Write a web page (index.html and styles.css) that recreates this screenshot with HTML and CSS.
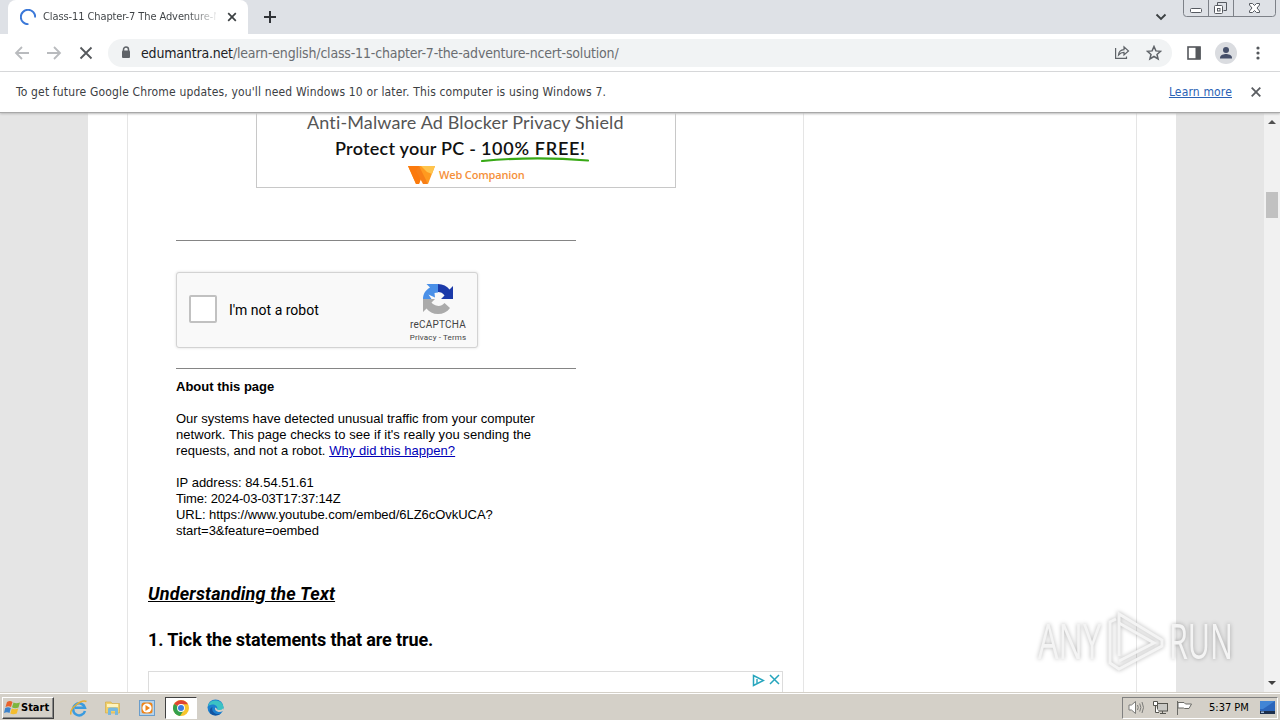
FILE: index.html
```html
<!DOCTYPE html>
<html lang="en">
	<head>
		<meta charset="UTF-8">
		<title>Class-11 Chapter-7 The Adventure</title>
		<link rel="stylesheet" href="styles.css">
	</head>
	<body>
		<div class="screen">

			<div class="tabstrip">
				<div class="tab">
					<svg class="spinner" width="16" height="16" viewBox="0 0 16 16"><path d="M8.500 15.200A7.200 7.200 0 1 1 15.200 8.500" fill="none" stroke="#3b78d8" stroke-width="2"/></svg>
					<span class="tab-title">Class-11 Chapter-7 The Adventure-N</span>
					<svg class="tab-close" width="10" height="10" viewBox="0 0 10 10"><path d="M1.200 1.200L8.800 8.800M8.800 1.200L1.200 8.800" stroke="#3c4043" stroke-width="1.700"/></svg>
				</div>
				<svg class="new-tab" width="12" height="12" viewBox="0 0 12 12"><path d="M6 0V12M0 6H12" stroke="#303337" stroke-width="2"/></svg>
				<svg class="tab-search" width="12" height="8" viewBox="0 0 12 8"><path d="M1.500 1.500L6 6L10.500 1.500" fill="none" stroke="#3c4043" stroke-width="1.900"/></svg>
				<div class="window-buttons">
					<svg width="93" height="17" viewBox="0 0 93 17" fill="none" stroke="#7d8188">
						<path d="M.5 0V13.500Q.5 16.500 3.500 16.500H89.500Q92.500 16.500 92.500 13.500V0M25.500 0V16M50.500 0V16"/>
						<g stroke="#565a61">
							<rect x="7.500" y="8.500" width="11" height="4" rx="1" fill="#fff"/>
							<path d="M34.500 5.500V2.500H43.500V10.500H40.500"/>
							<rect x="31.500" y="5.500" width="8" height="8" rx="1" fill="#fff"/>
							<rect x="34.500" y="8.500" width="2.500" height="2.500"/>
							<path d="M66.500 3.500H69.500L71.500 5.500L73.500 3.500H76.500V5L74 8L76.500 11V12.500H73.500L71.500 10.500L69.500 12.500H66.500V11L69 8L66.500 5Z" fill="#fff"/>
						</g>
					</svg>
				</div>
			</div>

			<div class="toolbar">
				<svg class="nav" width="16" height="14" viewBox="0 0 16 14"><path d="M15 7H2M8 1L2 7L8 13" fill="none" stroke="#b9bbbe" stroke-width="1.800"/></svg>
				<svg class="nav" width="16" height="14" viewBox="0 0 16 14"><path d="M1 7H14M8 1L14 7L8 13" fill="none" stroke="#b9bbbe" stroke-width="1.800"/></svg>
				<svg class="nav" width="16" height="14" viewBox="0 0 16 14"><path d="M2.500 1.500L13.500 12.500M13.500 1.500L2.500 12.500" stroke="#55585c" stroke-width="1.800"/></svg>
				<div class="omnibox">
					<svg width="10" height="13" viewBox="0 0 10 13"><path d="M2.500 5V3.500A2.500 2.500 0 0 1 7.500 3.500V5" fill="none" stroke="#5f6368" stroke-width="1.500"/><rect x="1" y="4.500" width="8" height="7.500" rx="1" fill="#5f6368"/></svg>
					<span class="url"><b>edumantra.net</b>/learn-english/class-11-chapter-7-the-adventure-ncert-solution/</span>
					<svg class="share" width="16" height="15" viewBox="0 0 16 15" fill="none" stroke="#5f6368" stroke-width="1.200"><path d="M1.600 3V13.400H12.500V11.500"/><path d="M4.500 10C4.800 6.500 7 4.800 10 4.600V1.800L14.500 6L10 10V7.400C7.500 7.400 6 8.200 4.500 10Z"/></svg>
					<svg class="star" width="16" height="16" viewBox="0 0 16 16"><path d="M8 1.500L9.900 5.900L14.600 6.300L11 9.400L12.100 14L8 11.500L3.900 14L5 9.400L1.400 6.300L6.100 5.900Z" fill="none" stroke="#5f6368" stroke-width="1.500"/></svg>
				</div>
				<svg class="panel-icon" width="14" height="14" viewBox="0 0 14 14"><rect x="1" y="1" width="12" height="12" fill="none" stroke="#55585c" stroke-width="1.600"/><rect x="8.500" y="1" width="5" height="12" fill="#55585c"/></svg>
				<svg class="avatar" width="22" height="22" viewBox="0 0 22 22"><circle cx="11" cy="11" r="11" fill="#dadce0"/><circle cx="11" cy="8" r="3" fill="#46506a"/><path d="M5 16.500V15.500C5 13 9 12 11 12S17 13 17 15.500V16.500Z" fill="#46506a"/></svg>
				<svg class="dots" width="4" height="14" viewBox="0 0 4 14" fill="#55585c"><circle cx="2" cy="2" r="1.600"/><circle cx="2" cy="7" r="1.600"/><circle cx="2" cy="12" r="1.600"/></svg>
			</div>

			<div class="infobar">
				<span class="info-text">To get future Google Chrome updates, you'll need Windows 10 or later. This computer is using Windows 7.</span>
				<a class="learn">Learn more</a>
				<svg width="10" height="10" viewBox="0 0 10 10"><path d="M.700 .700L9.300 9.300M9.300 .700L.700 9.300" stroke="#5a5d61" stroke-width="1.800"/></svg>
			</div>

			<div class="viewport">
				<div class="page">
					<div class="main">
						<div class="ad">
							<div class="ad-line">Anti-Malware Ad Blocker Privacy Shield</div>
							<div class="ad-bold">Protect your PC - <span class="free">100% FREE!</span></div>
							<svg class="ad-stroke" width="108" height="5" viewBox="0 0 108 5"><path d="M1 4Q54 -1 107 3.500" fill="none" stroke="#38a916" stroke-width="2.200" stroke-linecap="round"/></svg>
							<div class="ad-brand">
								<svg width="28" height="19" viewBox="0 0 28 19"><path d="M0 0H27L20 18L14 10L11 18H8Z" fill="#ff9a1f"/><path d="M0 0H11L14 10L11 18H8Z" fill="#fb7a0d"/><path d="M13 0H27L24 8L19 6Z" fill="#ffc44d"/><path d="M11 0L20 18H15L8 5Z" fill="#f77f17"/></svg>
								<span>Web Companion</span>
							</div>
						</div>

						<div class="check">
							<hr>
							<div class="captcha">
								<div class="box"></div>
								<div class="robot">I'm not a robot</div>
								<div class="captcha-logo">
									<svg width="32" height="32" viewBox="0 0 32 32">
										<path d="M16 1H4.500L8 4.500C3.500 7 1 11 1 16H9.500L6.500 11.500L13 14.500L12.500 10L16 9.500Z" fill="#4a90e8"/>
										<path d="M16 1C21 1 25 3.200 27.500 6.500L31 3V16H19L22.500 12.500C21 10 18.500 9 16 9Z" fill="#1c3aa9"/>
										<path d="M1 16V29L4.500 25.500C7 29 11 31 16 31C21 31 25 29 28 25L22.500 20C20 23 17 23.500 14 22.500C11.500 21.500 10 20.500 9.500 19.500L13 16Z" fill="#ababab"/>
									</svg>
									<div class="brand">reCAPTCHA</div>
									<div class="terms">Privacy - Terms</div>
								</div>
							</div>
							<hr>
							<div class="about">
								<b>About this page</b><br><br>
								<span>Our systems have detected unusual traffic from your computer</span><br>
								<span class="wide">network. This page checks to see if it's really you sending the</span><br>
								<span class="wide">requests, and not a robot. <a>Why did this happen?</a></span><br><br>
								<span>IP address: 84.54.51.61</span><br>
								<span class="time">Time: 2024-03-03T17:37:14Z</span><br>
								<span class="narrow">URL: https://www.youtube.com/embed/6LZ6cOvkUCA?</span><br>
								<span class="narrow">start=3&amp;feature=oembed</span>
							</div>
						</div>

						<h2 class="understanding">Understanding the Text</h2>
						<h3 class="tick">1. Tick the statements that are true.</h3>

						<div class="ad-bottom">
							<svg width="13" height="13" viewBox="0 0 13 13"><path d="M1.500 1.500V11.500L11.500 6.500Z" fill="none" stroke="#26a5bd" stroke-width="1.500"/><path d="M5 5V9" stroke="#26a5bd" stroke-width="1.400"/></svg>
							<svg width="11" height="11" viewBox="0 0 11 11"><path d="M1 1L10 10M10 1L1 10" stroke="#26a5bd" stroke-width="1.500"/></svg>
						</div>
					</div>
					<div class="sidebar"></div>
				</div>
				<div class="scrollbar">
					<div class="arrow-up"></div>
					<div class="thumb"></div>
					<div class="arrow-down"></div>
				</div>
			</div>

			<div class="taskbar">
				<div class="start">
					<svg width="17" height="15" viewBox="0 0 17 15"><path d="M3 2Q6 0 8.500 2L7 7Q4.500 5.500 1.500 7Z" fill="#e8622c"/><path d="M9.500 2.500Q12 4 16 2.500L14.500 7.500Q11 9 8 7.300Z" fill="#7db63f"/><path d="M1.200 8Q4 6.500 6.800 8L5.500 13Q3 11.500 0 13Z" fill="#3d83cc"/><path d="M7.800 8.500Q11 10 14.200 8.500L12.800 13.500Q9 15 6.300 13.500Z" fill="#f4bd2f"/></svg>
					<span>Start</span>
				</div>
				<div class="quick">
					<svg width="18" height="18" viewBox="0 0 18 18"><path d="M15 12A6 6 0 1 1 15 8.800H5" fill="none" stroke="#3a9bdf" stroke-width="2.500"/><path d="M1 15.500C-1 10 11 0 16.500 2.500" fill="none" stroke="#e5ae35" stroke-width="1.500"/></svg>
				</div>
				<div class="quick">
					<svg width="18" height="18" viewBox="0 0 18 18"><path d="M1.500 4V3H7L8 4.500H15.500V14H1.500Z" fill="#efcf6b" stroke="#d3a73e" stroke-width=".6"/><path d="M3 5H14V8H3Z" fill="#fff3bc"/><path d="M4 16V10Q4 8.500 6 8.500H12Q14 8.500 14 10V16H11V12H7V16Z" fill="#77b8df"/></svg>
				</div>
				<div class="quick">
					<svg width="18" height="18" viewBox="0 0 18 18"><rect x="1.500" y="1.500" width="15" height="15" fill="#b5d3ec" stroke="#6a9dcb"/><rect x="3.500" y="3.500" width="11" height="11" rx="2.500" fill="#ef8418"/><circle cx="9" cy="9" r="4.600" fill="#fff"/><path d="M7.500 6V12L12 9Z" fill="#ef8418"/></svg>
				</div>
				<div class="quick pressed">
					<svg width="16" height="16" viewBox="0 0 16 16"><circle cx="8" cy="8" r="8" fill="#f7c52d"/><path d="M8 8L1.100 4A8 8 0 0 1 14.900 4.300H8Z" fill="#df4433"/><path d="M8 8L1.100 4A8 8 0 0 0 7 16L11 10Z" fill="#34a04c"/><circle cx="8" cy="8" r="3.900" fill="#fff"/><circle cx="8" cy="8" r="3" fill="#3c7de0"/></svg>
				</div>
				<div class="quick">
					<svg width="17" height="17" viewBox="0 0 17 17"><circle cx="8.500" cy="8.500" r="8" fill="#1c7fcf"/><path d="M1 7A8 8 0 0 1 16.500 8.500C16.500 12 11 12.500 10 10.500C11.500 8 8.500 5 5 5.500Q2 6 1 7Z" fill="#3bc2c4"/><path d="M5.500 8C4 12 8 16.500 13.500 14.700C11 17 6 17 3.500 14.500C2 12 3 9 5.500 8Z" fill="#1454a0"/><path d="M8 8.500Q7.500 12 11.500 13Q14 13.200 16 12V9.500Q14 12 10 10.500Q10 9 8 8.500Z" fill="#d4d0c8"/></svg>
				</div>
				<div class="tray">
					<svg width="17" height="15" viewBox="0 0 17 15" fill="none" stroke="#7b7b78"><path d="M1 5H3.500L7.500 1.500V13.500L3.500 10H1Z" fill="#fff"/><path d="M9.500 5Q11 7.500 9.500 10M11.700 3.500Q14 7.500 11.700 11.500M14 2Q17 7.500 14 13"/></svg>
					<svg width="17" height="15" viewBox="0 0 17 15" fill="#fff" stroke="#55554f"><rect x="5.500" y="3.500" width="10" height="7.500" fill="#c9c9c5"/><path d="M8 13.500H14M10.500 11V13"/><path d="M1.500 1.500H5.500V5.500H1.500ZM3.500 5.500V12.500H7"/></svg>
					<svg width="17" height="15" viewBox="0 0 17 15" fill="#fff" stroke="#6b6b66"><path d="M1.500 1V15"/><path d="M2 2.500H8L9.500 4H15.500L13 8.500H8.500L7.500 8H2Z"/></svg>
					<span class="clock">5:37 PM</span>
					<svg width="15" height="13" viewBox="0 0 15 13"><rect width="15" height="10" fill="#2c66bb"/><path d="M0 0H15L3 8H0Z" fill="#4285d5"/><rect y="10" width="15" height="3" fill="#1d2f4c"/><rect x="1" y="10.500" width="3" height="1.500" fill="#9bb6d8"/></svg>
				</div>
			</div>

			<svg class="watermark" width="204" height="80" viewBox="0 -8 204 80">
				<g class="mark-text">
					<text x="3" y="49" textLength="63" lengthAdjust="spacingAndGlyphs">ANY</text>
					<text x="134" y="49" textLength="64" lengthAdjust="spacingAndGlyphs">RUN</text>
				</g>
				<g class="mark-lines">
					<path d="M84 46V4L127 30V36L84 59L75 53V12L81 9"/>
					<path d="M84 13L119 33L84 51"/>
				</g>
			</svg>
		</div>
	</body>
</html>
```

FILE: styles.css
```css
body {
	margin: 0;
	background: #fff;
	color: #000;
}

.screen {
	position: relative;
	display: flex;
	flex-direction: column;
	width: 1280px;
	height: 720px;
	overflow: hidden;
}

svg {
	display: block;
	flex-shrink: 0;
}

/* browser frame */
.tabstrip {
	display: flex;
	height: 34px;
	background: #dee1e6;
	flex-shrink: 0;
}

.tab {
	display: flex;
	align-items: center;
	box-sizing: border-box;
	width: 240px;
	margin-left: 8px;
	padding: 0 11px 0 12px;
	border-radius: 8px 8px 0 0;
	background: #fff;
}

.tab-title {
	width: 173px;
	margin: 0 11px 0 7px;
	overflow: hidden;
	white-space: nowrap;
	font: 11px/16px "DejaVu Sans Condensed", "DejaVu Sans", sans-serif;
	font-stretch: condensed;
	letter-spacing: -0.1px;
	color: transparent;
	background: linear-gradient(to right, #3c4043 145px, #fff 176px);
	background-clip: text;
}

.new-tab {
	margin: 11px 0 0 16px;
}

.tab-search {
	margin: 13px 16px 0 auto;
}

.window-buttons {
	width: 93px;
	margin-right: 4px;
}

.toolbar {
	display: flex;
	align-items: center;
	box-sizing: border-box;
	height: 38px;
	padding-left: 14px;
	border-bottom: 1px solid #d9dadc;
	background: #fff;
	flex-shrink: 0;
}

.nav {
	margin-right: 16px;
}

.omnibox {
	display: flex;
	align-items: center;
	box-sizing: border-box;
	width: 1064px;
	height: 28px;
	margin-left: -2px;
	padding: 0 10px 0 13px;
	border-radius: 14px;
	background: #f1f3f4;
}

.url {
	margin-left: 10px;
	white-space: nowrap;
	font: 14px/20px "DejaVu Sans Condensed", "DejaVu Sans", sans-serif;
	font-stretch: condensed;
	letter-spacing: -0.18px;
	color: #6a6d71;
}

.url b {
	font-weight: normal;
	color: #202124;
}

.share {
	margin-left: auto;
}

.star {
	margin-left: 16px;
}

.panel-icon {
	margin-left: 15px;
}

.avatar {
	margin-left: 14px;
}

.dots {
	margin-left: 19px;
}

.infobar {
	position: relative;
	display: flex;
	align-items: center;
	box-sizing: border-box;
	height: 41px;
	padding: 0 19px 0 16px;
	border-bottom: 1px solid #a8a8a8;
	box-shadow: 0 1px 2px #bbb;
	background: #fff;
	font: 12px/16px "DejaVu Sans Condensed", "DejaVu Sans", sans-serif;
	font-stretch: condensed;
	letter-spacing: 0.16px;
	color: #3c4043;
	flex-shrink: 0;
}

.info-text {
	white-space: nowrap;
}

.learn {
	margin: 0 19px 0 auto;
	color: #2a62b5;
	text-decoration: underline;
}

/* web page */
.viewport {
	display: flex;
	height: 579px;
	background: #e5e5e5;
	overflow: hidden;
}

.page {
	display: flex;
	box-sizing: border-box;
	width: 1088px;
	margin: 0 88px;
	padding: 0 39px;
	background: #fff;
}

.main {
	box-sizing: border-box;
	width: 677px;
	padding: 0 20px;
	border: solid #e5e5e5;
	border-width: 0 1px;
}

.sidebar {
	box-sizing: border-box;
	width: 333px;
	border-right: 1px solid #e5e5e5;
}

.ad {
	position: relative;
	box-sizing: border-box;
	width: 420px;
	height: 75px;
	margin: 0 108px;
	border: solid #c8c8c8;
	border-width: 0 1px 1px;
	font-family: Lato, sans-serif;
	white-space: nowrap;
}

.ad-line {
	padding-left: 50px;
	font-size: 18px;
	line-height: 18px;
	letter-spacing: 0.14px;
	color: #555;
}

.ad-bold {
	padding: 5px 0 0 78px;
	font-size: 18px;
	font-weight: 600;
	line-height: 24px;
	letter-spacing: 0.25px;
	color: #111;
}

.free {
	letter-spacing: 0.7px;
}

.ad-stroke {
	position: absolute;
	left: 224px;
	top: 44px;
}

.ad-brand {
	display: flex;
	gap: 3px;
	padding: 6px 0 0 151px;
	font: 600 11px/17px "Open Sans", sans-serif;
	letter-spacing: -0.15px;
	color: #f5903a;
}

.check {
	width: 400px;
	margin: 52px 0 0 28px;
}

hr {
	height: 1px;
	margin: 0;
	border: 0;
	background: #858585;
}

.captcha {
	display: flex;
	box-sizing: border-box;
	width: 302px;
	height: 76px;
	margin: 31px 0 20px;
	padding-left: 12px;
	border: 1px solid #d3d3d3;
	border-radius: 3px;
	background: #f9f9f9;
	box-shadow: 0 0 3px #ddd;
}

.box {
	box-sizing: border-box;
	width: 28px;
	height: 28px;
	margin-top: 22px;
	border: 2px solid #c1c1c1;
	border-radius: 2px;
	background: #fff;
}

.robot {
	width: 177px;
	margin: 28px 0 0 12px;
	font: 14px/18px Roboto, sans-serif;
}

.captcha-logo {
	display: flex;
	flex-direction: column;
	align-items: center;
	width: 64px;
	padding-top: 10px;
	color: #444;
}

.brand {
	margin-top: 4px;
	font: 10px/12px Roboto, sans-serif;
	letter-spacing: 0.2px;
}

.terms {
	margin-top: 1px;
	font: 8px/12px Roboto, sans-serif;
	letter-spacing: 0.15px;
	white-space: nowrap;
}

.about {
	padding-top: 10px;
	font: 13px/16px "Liberation Sans", Arial, sans-serif;
	white-space: nowrap;
}

.about a {
	color: #0000b8;
	text-decoration: underline;
}

.wide {
	letter-spacing: 0.05px;
}

.time {
	letter-spacing: -0.16px;
}

.narrow {
	letter-spacing: -0.04px;
}

.understanding {
	margin: 43px 0 0;
	font: italic bold 18px/24px Roboto, sans-serif;
	letter-spacing: 0.19px;
	text-decoration: underline;
}

.tick {
	margin: 22px 0 0;
	font: bold 18px/24px Roboto, sans-serif;
	letter-spacing: -0.12px;
}

.ad-bottom {
	display: flex;
	justify-content: flex-end;
	gap: 4px;
	box-sizing: border-box;
	height: 40px;
	margin-top: 19px;
	padding: 2px 2px 0;
	border: 1px solid #dcdcdc;
}

.scrollbar {
	display: flex;
	flex-direction: column;
	align-items: center;
	width: 16px;
	background: #f1f1f1;
	flex-shrink: 0;
}

.arrow-up {
	margin-top: 7px;
	border: 4px solid transparent;
	border-top: 0;
	border-bottom-color: #505050;
}

.thumb {
	width: 12px;
	height: 26px;
	margin-top: 68px;
	background: #c1c1c1;
}

.arrow-down {
	margin: auto 0 7px;
	border: 4px solid transparent;
	border-bottom: 0;
	border-top-color: #404040;
}

/* desktop taskbar */
.taskbar {
	display: flex;
	align-items: center;
	box-sizing: border-box;
	height: 28px;
	padding: 2px 2px 0;
	border-top: 1px solid #d4d0c8;
	background: #d4d0c8;
	box-shadow: inset 0 1px #fff;
	flex-shrink: 0;
}

.start {
	display: flex;
	align-items: center;
	box-sizing: border-box;
	width: 52px;
	height: 22px;
	margin-right: 9px;
	padding-left: 1px;
	border: 1px solid;
	border-color: #fff #404040 #404040 #fff;
	box-shadow: inset -1px -1px #888;
	font: bold 11px/16px "DejaVu Sans Condensed", "DejaVu Sans", sans-serif;
	font-stretch: condensed;
}

.quick {
	display: flex;
	align-items: center;
	justify-content: center;
	box-sizing: border-box;
	width: 32px;
	height: 22px;
	margin-right: 2px;
}

.pressed {
	border: 1px solid;
	border-color: #404040 #fff #fff #404040;
	background: #fff;
}

.tray {
	display: flex;
	align-items: center;
	gap: 7px;
	box-sizing: border-box;
	width: 156px;
	height: 22px;
	margin-left: auto;
	padding-left: 5px;
	border: 1px solid;
	border-color: #808080 #fff #fff #808080;
}

.clock {
	width: 44px;
	margin-left: 9px;
	white-space: nowrap;
	font: 11px/16px "DejaVu Sans Condensed", "DejaVu Sans", sans-serif;
	font-stretch: condensed;
}

.watermark {
	position: absolute;
	left: 1035px;
	top: 602px;
	filter: drop-shadow(0 0 2px rgba(0, 0, 0, .3));
}

.mark-text {
	font: 50px "Open Sans", sans-serif;
	fill: #f4f4f4;
}

.mark-lines {
	fill: none;
	stroke: #f4f4f4;
	stroke-width: 3;
}
```
